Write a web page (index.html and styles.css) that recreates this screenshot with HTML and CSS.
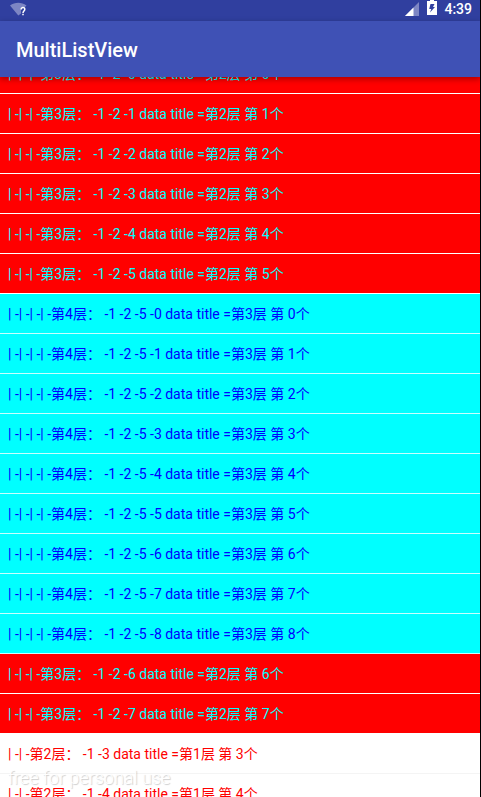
FILE: index.html
```
<!DOCTYPE html>
<html lang="zh-CN">
<head>
<meta charset="utf-8">
<meta name="viewport" content="width=device-width, initial-scale=1">
<title>MultiListView</title>
<link rel="stylesheet" href="styles.css">
</head>
<body>
<div class="screen">
  <div class="status">
    <svg class="wifi" width="18" height="16" viewBox="0 0 18 16" aria-hidden="true">
      <path d="M0 3.500C5-.2 11.500-.2 16.500 3.500L15 5H11v6.500L8.300 13.500z" fill="#7d86c4"/>
      <path d="M11.200 7.500C11.200 4.800 14.800 4.800 14.800 7.200C14.800 9 13 9 13 11M13 11.800V13.300" fill="none" stroke="#fff" stroke-width="1.500"/>
    </svg>
    <svg class="signal" width="14" height="14" viewBox="0 0 14 14" aria-hidden="true">
      <path d="M0 14L14 0V14z" fill="#7d86c4"/>
      <path d="M0 14L8.500 5.500V14z" fill="#fff"/>
    </svg>
    <svg class="battery" width="10" height="15" viewBox="0 0 10 15" aria-hidden="true">
      <path d="M0 1H3V0H7V1H10V15H0z" fill="#fff"/>
      <path d="M3.500 4H7.500L6 7H8L3 12.500L4.300 9H2.200z" fill="#303f9f"/>
    </svg>
    <time class="clock">4:39</time>
  </div>
  <header class="appbar"><h1 class="title">MultiListView</h1></header>
  <main class="viewport">
    <ul class="list">
      <li class="row level3">| -| -| -第3层： -1 -2 -0 data title =第2层 第 0个</li>
      <li class="row level3">| -| -| -第3层： -1 -2 -1 data title =第2层 第 1个</li>
      <li class="row level3">| -| -| -第3层： -1 -2 -2 data title =第2层 第 2个</li>
      <li class="row level3">| -| -| -第3层： -1 -2 -3 data title =第2层 第 3个</li>
      <li class="row level3">| -| -| -第3层： -1 -2 -4 data title =第2层 第 4个</li>
      <li class="row level3">| -| -| -第3层： -1 -2 -5 data title =第2层 第 5个</li>
      <li class="row level4">| -| -| -| -第4层： -1 -2 -5 -0 data title =第3层 第 0个</li>
      <li class="row level4">| -| -| -| -第4层： -1 -2 -5 -1 data title =第3层 第 1个</li>
      <li class="row level4">| -| -| -| -第4层： -1 -2 -5 -2 data title =第3层 第 2个</li>
      <li class="row level4">| -| -| -| -第4层： -1 -2 -5 -3 data title =第3层 第 3个</li>
      <li class="row level4">| -| -| -| -第4层： -1 -2 -5 -4 data title =第3层 第 4个</li>
      <li class="row level4">| -| -| -| -第4层： -1 -2 -5 -5 data title =第3层 第 5个</li>
      <li class="row level4">| -| -| -| -第4层： -1 -2 -5 -6 data title =第3层 第 6个</li>
      <li class="row level4">| -| -| -| -第4层： -1 -2 -5 -7 data title =第3层 第 7个</li>
      <li class="row level4">| -| -| -| -第4层： -1 -2 -5 -8 data title =第3层 第 8个</li>
      <li class="row level3">| -| -| -第3层： -1 -2 -6 data title =第2层 第 6个</li>
      <li class="row level3">| -| -| -第3层： -1 -2 -7 data title =第2层 第 7个</li>
      <li class="row level2">| -| -第2层： -1 -3 data title =第1层 第 3个</li>
      <li class="row level2">| -| -第2层： -1 -4 data title =第1层 第 4个</li>
    </ul>
  </main>
  <div class="watermark">free for personal use</div>
</div>
</body>
</html>
```
FILE: styles.css
```
* { box-sizing: border-box; }
body {
  margin: 0;
  font-family: Roboto, "Noto Sans CJK SC", sans-serif;
}
.screen {
  position: relative;
  display: flex;
  flex-direction: column;
  height: 100vh;
  overflow: hidden;
  background: #fff;
  border-right: 1px solid #000;
}
.status {
  display: flex;
  flex: none;
  align-items: flex-start;
  height: 21px;
  padding: 0 8px 0 10px;
  background: #303f9f;
  color: #fff;
}
.wifi { margin-top: 2px; }
.signal { margin: 2px 8px 0 auto; }
.clock {
  margin-left: 7px;
  font-size: 14px;
  line-height: 18px;
  font-weight: 500;
}
.appbar {
  position: relative;
  z-index: 1;
  display: flex;
  flex: none;
  align-items: center;
  height: 56px;
  padding: 2px 16px 0;
  background: #3f51b5;
  box-shadow: 0 2px 6px rgba(0, 0, 0, 0.35);
}
.title {
  margin: 0;
  color: #fff;
  font-size: 20px;
  line-height: 24px;
  font-weight: 500;
}
.viewport {
  flex: 1;
  min-height: 0;
  overflow: hidden;
}
/* The list is scrolled part of a row up, under the app bar. */
.list {
  margin: -23px 0 0;
  padding: 0;
  list-style: none;
}
.row {
  height: 40px;
  padding: 0 8px;
  border-bottom: 1px solid #f4f4f4;
  font-size: 14px;
  line-height: 40px;
  white-space: nowrap;
}
.level2 { background-color: #fff; color: #f00; }
.level3 { background-color: #f00; color: #0ff; border-color: #fff; }
.level4 { background-color: #0ff; color: #00f; border-color: #c8ffff; }
.watermark {
  position: absolute;
  left: 8px;
  bottom: 7px;
  color: #fff;
  font-size: 18px;
  line-height: 24px;
  font-weight: 300;
  text-shadow: 1px 1px 1px rgba(0, 0, 0, 0.2);
}
```
